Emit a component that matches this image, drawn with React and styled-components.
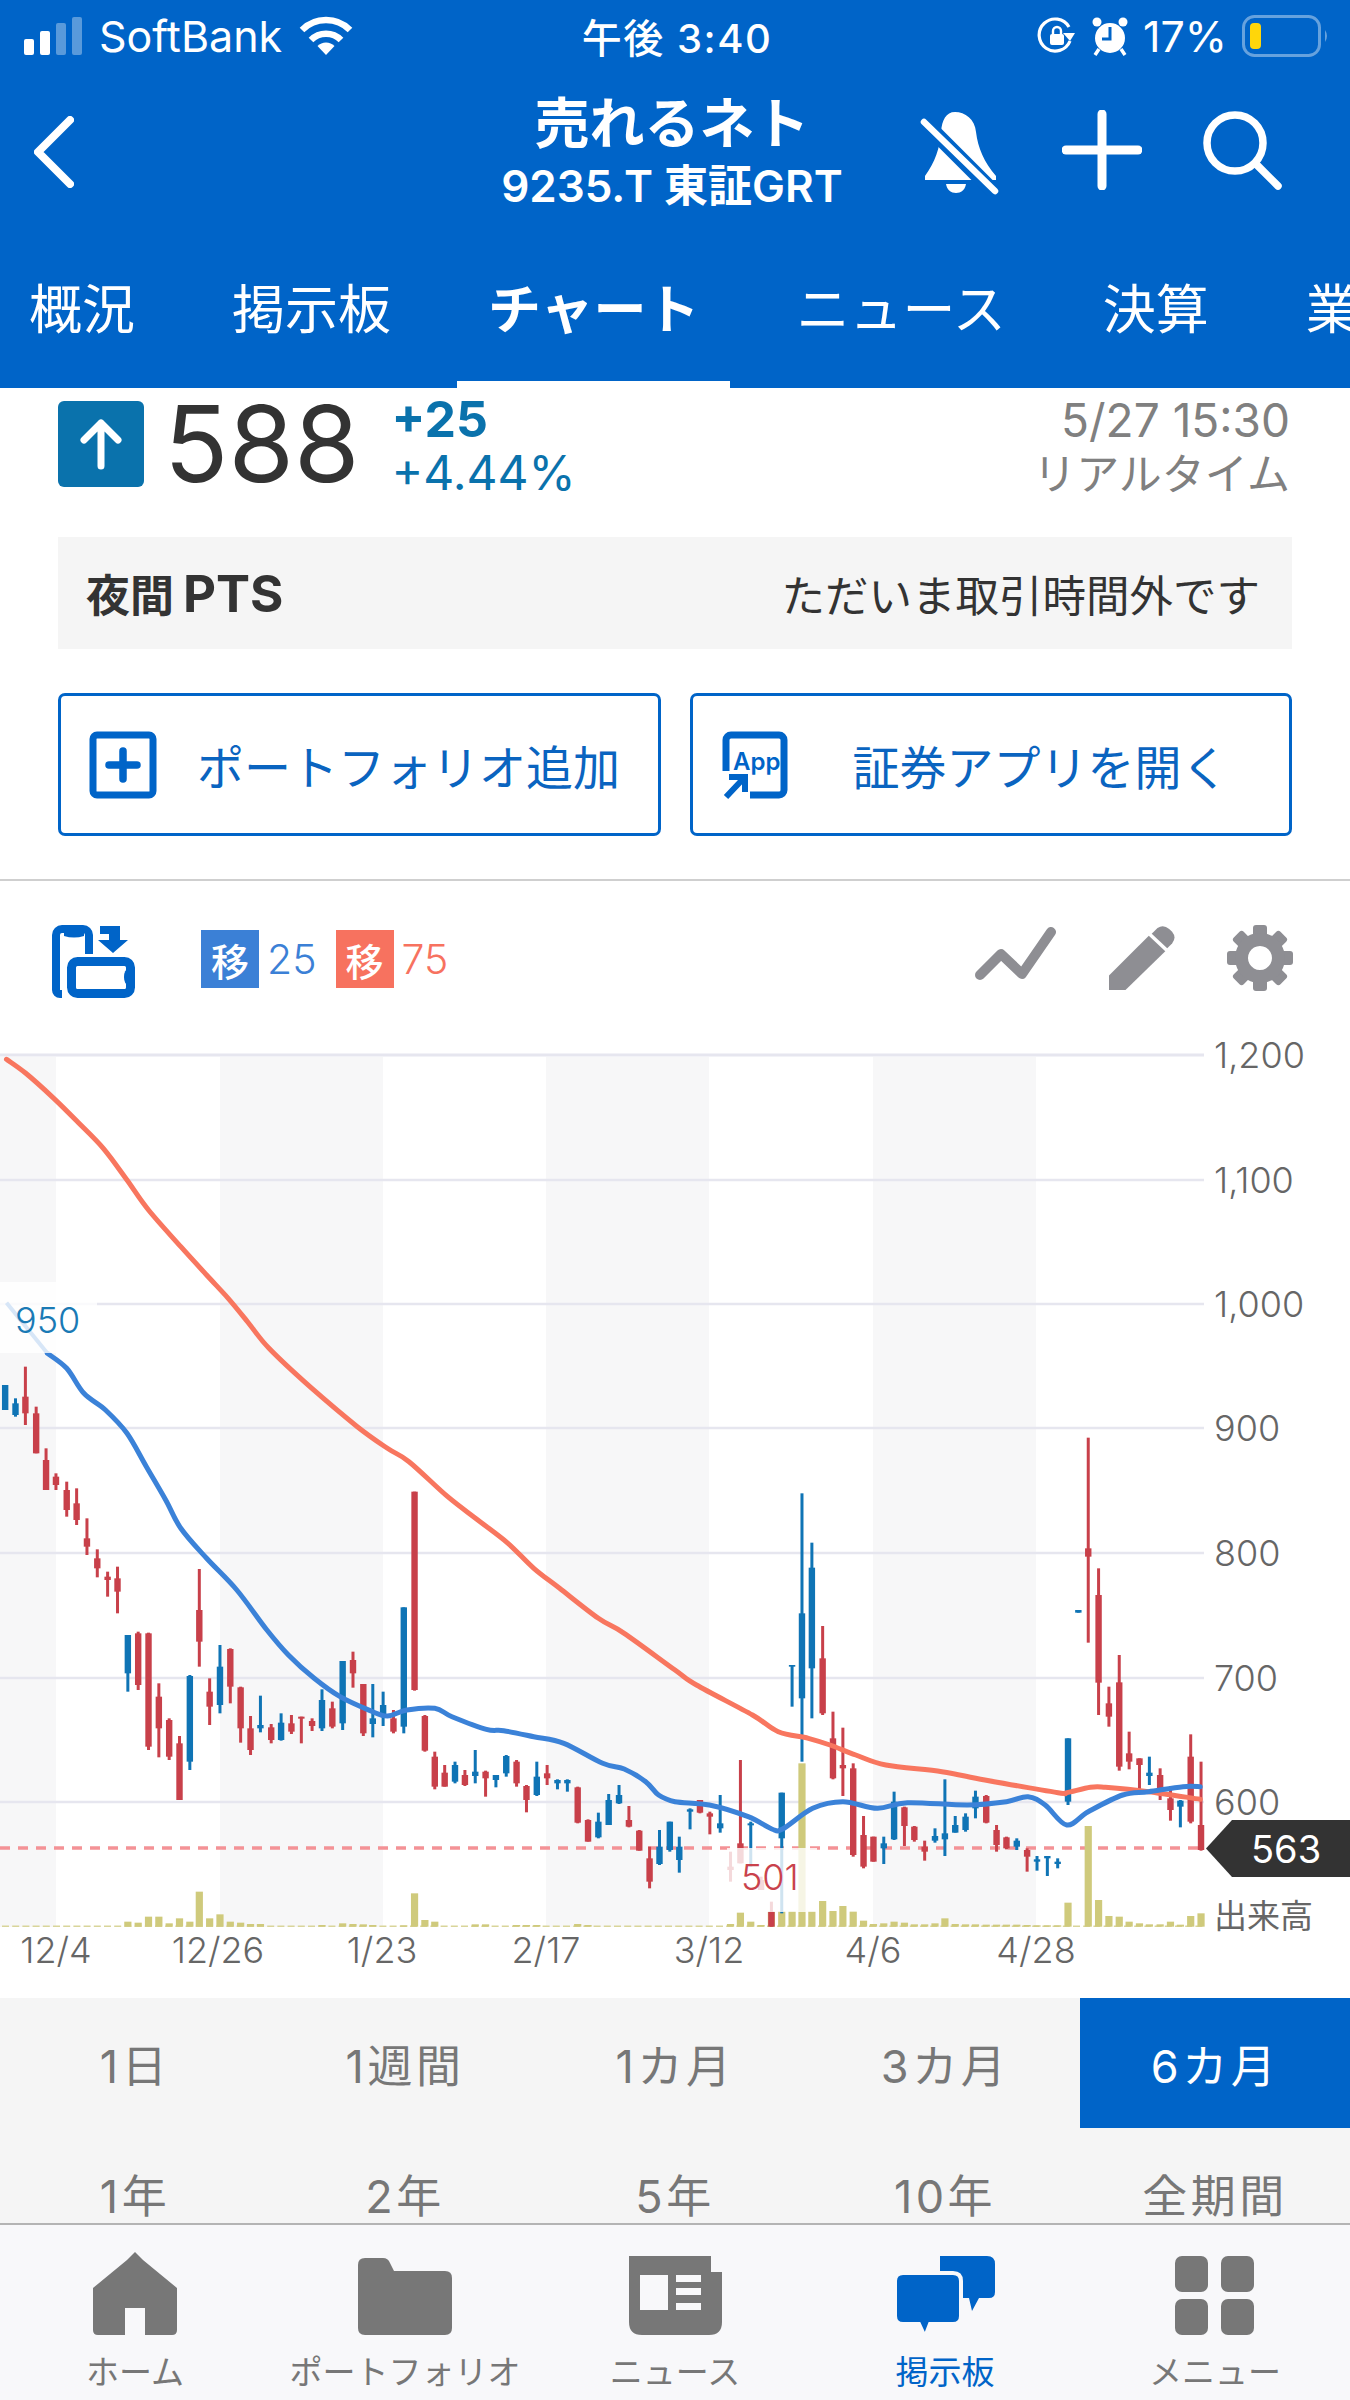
import React from 'react';
import styled, { createGlobalStyle } from 'styled-components';

const BLUE = '#0064c8';
const FONT = '"Inter", "Noto Sans CJK JP", sans-serif';

const Global = createGlobalStyle`
  html, body { margin: 0; padding: 0; background: #fff; }
  body { font-family: ${FONT}; }
  * { box-sizing: border-box; }
`;

const Page = styled.div`
  width: 1350px;
  height: 2400px;
  overflow: hidden;
  display: flex;
  flex-direction: column;
  background: #fff;
  color: #333;
`;

/* ---------- header ---------- */
const Header = styled.header`
  height: 388px;
  background: ${BLUE};
  color: #fff;
  overflow: hidden;
  display: flex;
  flex-direction: column;
`;
const StatusBar = styled.div`
  height: 72px;
  display: grid;
  grid-template-columns: 1fr auto 1fr;
  align-items: center;
  font-size: 43px;
  padding: 0 20px 0 24px;
`;
const StatusLeft = styled.div`
  display: flex;
  align-items: center;
  gap: 17px;
`;
const StatusRight = styled.div`
  display: flex;
  align-items: center;
  justify-content: flex-end;
  gap: 15px;
`;
const StatusTime = styled.div`
  font-weight: 500;
  font-size: 40px;
  letter-spacing: 1.5px;
`;
const NavRow = styled.div`
  height: 168px;
  display: grid;
  grid-template-columns: 1fr auto 1fr;
  padding: 0 40px 0 34px;
`;
const Back = styled.svg`
  width: 40px;
  height: 72px;
  margin-top: 44px;
`;
const TitleBlock = styled.div`
  display: flex;
  flex-direction: column;
  align-items: center;
  padding-top: 20px;
`;
const Title = styled.div`
  font-size: 55px;
  font-weight: 600;
  line-height: 62px;
`;
const Sub = styled.div`
  font-size: 44px;
  font-weight: 600;
  line-height: 50px;
  margin-top: 7px;
`;
const NavIcons = styled.div`
  display: flex;
  justify-content: flex-end;
  gap: 60px;
  padding: 38px 28px 0 0;
  align-items: flex-start;
`;
const Tabs = styled.nav`
  height: 148px;
  display: flex;
  gap: 97px;
  padding: 31px 0 0 29px;
`;
const Tab = styled.div`
  position: relative;
  flex: none;
  height: 117px;
  font-size: 53px;
  line-height: 78px;
  white-space: nowrap;
  font-weight: ${p => (p.$active ? 700 : 400)};
  ${p =>
    p.$active &&
    `&::after {
      content: '';
      position: absolute;
      left: -31px;
      right: -31px;
      bottom: 0;
      height: 7px;
      background: #fff;
    }`}
`;

/* ---------- quote ---------- */
const Quote = styled.section`
  height: 149px;
  padding: 13px 60px 0 58px;
  display: flex;
  align-items: flex-start;
`;
const UpBox = styled.div`
  width: 86px;
  height: 86px;
  border-radius: 6px;
  background: #0a72ac;
  display: flex;
  align-items: center;
  justify-content: center;
`;
const Price = styled.div`
  font-size: 106px;
  line-height: 86px;
  font-weight: 400;
  margin-left: 20px;
  color: #333;
`;
const Change = styled.div`
  margin-left: 32px;
  margin-top: -8px;
  display: flex;
  flex-direction: column;
  color: #0a72ac;
`;
const ChangeAbs = styled.div`
  font-size: 50px;
  font-weight: 700;
  line-height: 52px;
`;
const ChangePct = styled.div`
  font-size: 48px;
  font-weight: 400;
  line-height: 56px;
`;
const Stamp = styled.div`
  margin-left: auto;
  margin-top: -8px;
  text-align: right;
  color: #808080;
  display: flex;
  flex-direction: column;
`;
const StampDate = styled.div`
  font-size: 46px;
  line-height: 54px;
`;
const StampKind = styled.div`
  font-size: 43px;
  line-height: 54px;
`;

const PtsBox = styled.div`
  margin: 0 58px;
  height: 112px;
  background: #f5f5f5;
  display: flex;
  align-items: center;
  justify-content: space-between;
  padding: 0 32px 0 28px;
`;
const PtsLabel = styled.div`
  font-size: 44px;
  font-weight: 700;
  display: flex;
  align-items: baseline;
  gap: 9px;
`;
const PtsLatin = styled.span`
  font-size: 51px;
`;
const PtsNote = styled.div`
  font-size: 43.5px;
  font-weight: 400;
`;
const Actions = styled.div`
  margin: 44px 58px 43px;
  display: grid;
  grid-template-columns: 1fr 1fr;
  gap: 29px;
`;
const ActionBtn = styled.div`
  height: 143px;
  border: 3px solid ${BLUE};
  border-radius: 7px;
  display: flex;
  align-items: center;
  padding-left: ${p => p.$pad}px;
  gap: ${p => p.$gap}px;
  color: #0a64c0;
  font-size: 47px;
`;
const Divider = styled.div`
  height: 2px;
  background: #cfcfcf;
`;

/* ---------- tool row ---------- */
const ToolRow = styled.div`
  height: 139px;
  display: flex;
  align-items: flex-start;
  padding: 44px 57px 0 52px;
`;
const MaGroup = styled.div`
  display: flex;
  align-items: center;
  height: 58px;
  margin-top: 5px;
  margin-left: 63px;
  gap: 8px;
`;
const MaBadge = styled.div`
  width: 58px;
  height: 58px;
  background: ${p => p.$c};
  color: #fff;
  font-size: 38px;
  font-weight: 500;
  display: flex;
  align-items: center;
  justify-content: center;
`;
const MaValue = styled.div`
  color: ${p => p.$c};
  font-size: 41px;
  margin-right: 11px;
  font-weight: 300;
`;
const ToolIcons = styled.div`
  margin-left: auto;
  display: flex;
  gap: 52px;
  align-items: flex-start;
`;

/* ---------- chart ---------- */
const ChartWrap = styled.div`
  position: relative;
  height: 978px;
`;
const ChartSvg = styled.svg`
  display: block;
  width: 1350px;
  height: 978px;
`;
const AxisText = styled.text`
  font-family: ${FONT};
  font-size: ${p => p.$size || 36}px;
  fill: #666;
  font-weight: ${p => p.$weight || 300};
`;
const Callout = styled.div`
  position: absolute;
  left: ${p => p.$x}px;
  top: ${p => p.$y}px;
  width: ${p => p.$w}px;
  height: ${p => p.$h}px;
  background: rgba(255, 255, 255, 0.8);
  color: ${p => p.$c};
  font-size: 36px;
  font-weight: 300;
  padding: ${p => p.$py}px 0 0 ${p => p.$px}px;
  line-height: 35px;
`;
const LastTag = styled.div`
  position: absolute;
  left: 1206px;
  top: 800px;
  width: 144px;
  height: 57px;
  background: #333;
  color: #fff;
  font-size: 38px;
  display: flex;
  align-items: center;
  padding-left: 45px;
  clip-path: polygon(0 50%, 26px 0, 100% 0, 100% 100%, 26px 100%);
`;

/* ---------- periods ---------- */
const Periods = styled.div`
  height: 225px;
  overflow: hidden;
  background: #f5f5f5;
  display: grid;
  grid-template-columns: repeat(5, 270px);
  grid-auto-rows: 130px;
`;
const Period = styled.div`
  display: flex;
  align-items: center;
  justify-content: center;
  font-size: 45px;
  letter-spacing: 3.5px;
  color: ${p => (p.$active ? '#fff' : '#777')};
  background: ${p => (p.$active ? BLUE : 'transparent')};
`;

/* ---------- tab bar ---------- */
const TabBar = styled.div`
  height: 177px;
  border-top: 2px solid #b4b4b4;
  background: #f8f8fa;
  display: grid;
  grid-template-columns: repeat(5, 270px);
`;
const BarItem = styled.div`
  display: flex;
  flex-direction: column;
  align-items: center;
  padding-top: 27px;
  color: ${p => (p.$active ? BLUE : '#777')};
  font-size: 33px;
  line-height: 40px;
  white-space: nowrap;
`;
const BarLabel = styled.div`
  margin-top: 16px;
`;

/* ---------- chart data (zoom-image coordinates) ---------- */
const O = 1568;
const CANDLES = [
  [12,-345,-270,-345,-270,'b'],[36,-305,-250,-290,-255,'b'],[59,-400,-225,-310,-260,'r'],[84,-280,-140,-260,-140,'r'],
  [107,-155,-30,-120,-30,'r'],[130,-80,-30,-70,-45,'r'],[155,-55,50,-30,30,'r'],[178,-35,75,10,60,'r'],
  [202,55,165,115,140,'r'],[226,148,232,175,205,'r'],[250,215,290,230,240,'r'],[273,200,340,235,275,'r'],
  [297,405,575,405,520,'b'],[321,395,570,400,555,'r'],[345,398,750,400,740,'r'],[369,550,772,590,685,'r'],
  [393,655,780,660,770,'r'],[417,708,900,730,900,'r'],[441,525,810,528,785,'b'],[463,207,500,330,425,'r'],
  [487,535,675,575,620,'r'],[511,435,640,500,615,'b'],[535,445,610,447,560,'r'],[559,560,728,562,685,'r'],
  [582,648,765,685,750,'r'],[605,587,697,675,685,'b'],[630,672,730,682,720,'r'],[653,640,722,668,720,'b'],
  [677,645,702,670,695,'r'],[700,650,730,650,656,'r'],[725,655,693,663,678,'r'],[748,568,693,600,685,'b'],
  [772,605,685,625,680,'r'],[796,483,690,483,670,'b'],[820,455,563,480,520,'r'],[844,552,708,552,700,'r'],
  [866,552,712,655,672,'b'],[890,575,678,615,650,'b'],[914,630,700,655,695,'r'],[938,322,700,322,680,'b'],
  [963,-25,572,-25,570,'r'],[987,645,755,648,752,'r'],[1010,755,868,770,860,'r'],[1033,795,860,818,860,'r'],
  [1057,785,850,795,845,'b'],[1080,810,858,825,855,'r'],[1104,750,850,815,828,'b'],[1128,812,890,815,835,'r'],
  [1152,825,862,825,840,'b'],[1176,765,830,768,820,'b'],[1200,780,860,785,850,'r'],[1223,855,937,858,900,'r'],
  [1247,785,888,830,885,'b'],[1271,795,855,820,835,'r'],[1295,838,868,840,850,'b'],[1318,838,875,840,850,'b'],
  [1342,860,970,862,968,'r'],[1366,958,1025,960,1025,'r'],[1390,938,1015,965,1012,'b'],[1414,882,975,900,975,'b'],
  [1438,855,912,885,910,'b'],[1461,918,982,960,980,'r'],[1485,990,1052,992,1052,'r'],[1509,1040,1165,1075,1145,'r'],
  [1532,990,1095,1040,1092,'b'],[1556,965,1055,965,1050,'b'],
  [O+10,1010,1118,1040,1080,'b'],[O+35,925,988,928,935,'b'],[O+58,900,940,900,938,'r'],[O+81,935,1003,940,950,'r'],
  [O+105,885,998,970,985,'b'],[O+129,1055,1145,1100,1110,'r'],[O+152,780,1090,1030,1090,'r'],[O+176,965,1100,970,976,'b'],
  [O+200,1130,1170,1140,1170,'r'],[O+224,1205,1280,1235,1280,'r'],[O+248,878,1240,878,1015,'b'],[O+272,495,620,495,500,'b'],
  [O+295,-20,785,340,595,'b'],[O+318,128,655,203,505,'b'],[O+343,378,645,475,640,'r'],[O+367,635,838,715,835,'r'],
  [O+390,683,888,795,805,'r'],[O+414,790,1070,805,1065,'r'],[O+438,948,1105,1005,1100,'r'],[O+461,1010,1085,1010,1085,'r'],
  [O+485,1010,1092,1030,1045,'b'],[O+509,875,1020,905,1018,'b'],[O+533,920,1038,922,978,'r'],[O+556,978,1025,980,1020,'r'],
  [O+580,1022,1082,1040,1055,'r'],[O+604,985,1028,1008,1022,'b'],[O+627,838,1068,1000,1018,'b'],[O+651,948,998,975,998,'b'],
  [O+675,940,995,950,990,'b'],[O+698,872,955,890,925,'b'],[O+723,885,970,888,968,'r'],[O+747,975,1055,990,1035,'r'],
  [O+770,1010,1048,1012,1045,'r'],[O+794,1015,1050,1022,1040,'b'],[O+818,1045,1115,1050,1070,'r'],[O+841,1068,1112,1078,1085,'b'],
  [O+865,1068,1128,1068,1075,'b'],[O+889,1075,1105,1085,1092,'b'],[O+913,715,915,715,905,'b'],[O+937,330,338,330,338,'b'],
  [O+960,-187,428,145,170,'r'],[O+984,205,645,285,548,'r'],[O+1008,560,680,610,650,'r'],[O+1032,465,812,547,800,'r'],
  [O+1055,695,808,760,785,'r'],[O+1079,775,870,775,795,'r'],[O+1102,770,855,818,828,'b'],[O+1127,805,900,825,865,'r'],
  [O+1151,858,962,895,930,'r'],[O+1174,900,982,902,920,'b'],[O+1198,703,970,770,965,'r'],[O+1222,785,1052,975,1050,'r'],
];
const VOLS = [
  [297,1265],[321,1268],[345,1250],[369,1250],[393,1270],[417,1255],[441,1265],[463,1175],[487,1255],[511,1243],[535,1265],
  [559,1268],[582,1272],[605,1272],[748,1275],[796,1270],[820,1272],[844,1273],[866,1275],[938,1276],[963,1180],[987,1260],
  [1010,1265],[1104,1273],[1128,1273],[1200,1275],[1223,1275],[1247,1275],[1342,1272],[1366,1275],
  [O+129,1272],[O+152,1238],[O+176,1265],[O+200,1275],[O+224,1235],[O+248,1233],[O+272,1233],[O+295,790],[O+318,1233],
  [O+343,1203],[O+367,1233],[O+390,1218],[O+414,1235],[O+438,1262],[O+461,1272],[O+485,1270],[O+509,1265],[O+533,1268],
  [O+556,1273],[O+580,1273],[O+604,1270],[O+627,1255],[O+651,1272],[O+675,1273],[O+698,1273],[O+723,1274],[O+747,1274],
  [O+770,1274],[O+794,1274],[O+818,1275],[O+841,1276],[O+865,1276],[O+889,1276],[O+913,1208],[O+960,978],[O+984,1200],
  [O+1008,1248],[O+1032,1250],[O+1055,1265],[O+1079,1270],[O+1102,1273],[O+1127,1273],[O+1151,1265],[O+1174,1274],
  [O+1198,1248],[O+1222,1240],
];
const MA75 = [
  [15,-1322],[60,-1280],[125,-1205],[180,-1135],[240,-1055],[295,-960],[345,-870],[420,-760],[480,-675],[530,-605],[575,-535],
  [625,-455],[720,-340],[830,-220],[900,-155],[950,-115],[1040,-10],[1110,60],[1180,130],[1240,205],[1300,265],[1390,355],
  [1450,400],[1568,510],[O+50,555],[O+180,645],[O+240,695],[O+310,715],[O+360,735],[O+420,765],[O+490,795],[O+620,815],
  [O+720,840],[O+890,878],[O+910,878],[O+965,862],[O+1000,862],[O+1100,875],[O+1220,898],
];
const MA25_HEAD = [[15,-592],[110,-440]];
const MA25 = [
  [110,-440],[155,-395],[195,-320],[245,-270],[295,-200],[340,-100],[385,0],[420,85],[480,175],[550,270],[620,390],[670,465],
  [730,535],[790,590],[860,632],[900,648],[945,630],[1010,625],[1050,650],[1130,688],[1170,692],[1240,710],[1310,730],
  [1400,790],[1450,807],[1500,845],[1530,885],[1568,905],[O+80,915],[O+170,950],[O+225,987],[O+250,987],[O+320,925],
  [O+390,905],[O+470,925],[O+540,908],[O+680,915],[O+770,905],[O+820,890],[O+860,915],[O+910,975],[O+960,935],[O+1040,885],
  [O+1100,875],[O+1180,860],[O+1220,860],
];
const X = x => x / 2.323;
const Y = y => 1500 + y / 3;

/* smooth path through the points (Catmull-Rom to Bezier) */
const smooth = a => {
  const p = a.map(([x, y]) => [X(x), Y(y)]);
  let d = `M${p[0][0].toFixed(1)} ${p[0][1].toFixed(1)}`;
  for (let i = 0; i < p.length - 1; i++) {
    const p0 = p[i - 1] || p[i];
    const p1 = p[i];
    const p2 = p[i + 1];
    const p3 = p[i + 2] || p2;
    const c1 = [p1[0] + (p2[0] - p0[0]) / 6, p1[1] + (p2[1] - p0[1]) / 6];
    const c2 = [p2[0] - (p3[0] - p1[0]) / 6, p2[1] - (p3[1] - p1[1]) / 6];
    d += ` C${c1[0].toFixed(1)} ${c1[1].toFixed(1)} ${c2[0].toFixed(1)} ${c2[1].toFixed(1)} ${p2[0].toFixed(1)} ${p2[1].toFixed(1)}`;
  }
  return d;
};

const GRID = [
  [1055, '1,200'], [1180, '1,100'], [1304, '1,000'], [1428, '900'], [1553, '800'], [1678, '700'], [1802, '600'],
];
const STRIPES = [0, 220, 546, 873];
const DATES = [[56,'12/4'],[218,'12/26'],[382,'1/23'],[546,'2/17'],[709,'3/12'],[873,'4/6'],[1036,'4/28']];

function Chart() {
  return (
    <ChartWrap>
      <ChartSvg viewBox="0 1020 1350 978">
        {STRIPES.map((x, i) => (
          <rect key={x} x={x} y={1057} width={i === 0 ? 56 : 163} height={870} fill="#f7f7f8" />
        ))}
        {GRID.map(([y, t]) => (
          <g key={t}>
            <line x1={0} x2={1204} y1={y} y2={y} stroke="#e6e6ef" strokeWidth={y === 1055 ? 3 : 2.4} />
            <AxisText x={1214} y={y + 13}>{t}</AxisText>
          </g>
        ))}
        <line x1={0} x2={1204} y1={1848} y2={1848} stroke="#f49296" strokeWidth={3.5} strokeDasharray="10 8" />
        {Array.from({ length: 118 }, (_, i) => (
          <rect key={i} x={2 + i * 10.2} y={1925.5} width={7} height={1.5} fill="#d9d59a" />
        ))}
        {VOLS.map(([x, t]) => (
          <rect key={x} x={X(x) - 3.6} y={Y(t)} width={7.2} height={Y(1280) - Y(t)} fill="#cfca7c" />
        ))}
        {CANDLES.map(([x, wt, wb, bt, bb, c]) => {
          const col = c === 'r' ? '#c8404a' : '#0f74b5';
          return (
            <g key={x} fill={col}>
              <rect x={X(x) - 1.5} y={Y(wt)} width={3} height={Y(wb) - Y(wt)} />
              <rect x={X(x) - 3.2} y={Y(bt)} width={6.4} height={Math.max(Y(bb) - Y(bt), 1.5)} />
            </g>
          );
        })}
        <path d={smooth(MA25_HEAD)} fill="none" stroke="#3b82d8" strokeWidth={4} />
        <path d={smooth(MA75)} fill="none" stroke="#f8765f" strokeWidth={5} strokeLinecap="round" />
        <path d={smooth(MA25)} fill="none" stroke="#3b82d8" strokeWidth={5} strokeLinecap="round" />
        <AxisText x={1214} y={1928} $size={33} $weight={400}>出来高</AxisText>
        {DATES.map(([x, t]) => (
          <AxisText key={t} x={x} y={1963} textAnchor="middle">{t}</AxisText>
        ))}
      </ChartSvg>
      <Callout $x={0} $y={262} $w={97} $h={71} $c="#1a7ab5" $px={15} $py={21}>950</Callout>
      <Callout $x={727} $y={828} $w={90} $h={64} $c="#c9424c" $px={14} $py={12}>501</Callout>
      <LastTag>563</LastTag>
    </ChartWrap>
  );
}

/* ---------- icons ---------- */
const Signal = () => (
  <svg width="58" height="38" viewBox="0 0 58 38" fill="#fff">
    <rect x="0" y="22" width="10" height="16" rx="2" />
    <rect x="16" y="14" width="10" height="24" rx="2" />
    <rect x="32" y="6" width="10" height="32" rx="2" opacity=".35" />
    <rect x="48" y="0" width="10" height="38" rx="2" opacity=".35" />
  </svg>
);
const Wifi = () => (
  <svg width="54" height="40" viewBox="0 0 54 40" fill="none" stroke="#fff" strokeWidth="6.5">
    <path d="M3 14 A34 34 0 0 1 51 14" />
    <path d="M12 24 A21 21 0 0 1 42 24" />
    <path d="M27 39 L18.5 30 A12 12 0 0 1 35.5 30 Z" fill="#fff" stroke="none" />
  </svg>
);
const RotLock = () => (
  <svg width="40" height="40" viewBox="0 0 40 40" fill="none">
    <path d="M33 25 A16 16 0 1 1 32 11" stroke="#fff" strokeWidth="3.2" />
    <path d="M26 17 L38 17 L33 25 Z" fill="#fff" />
    <rect x="13" y="18" width="14" height="11" rx="2" fill="#fff" />
    <path d="M16 18 V15 a4 4 0 0 1 8 0 V18" stroke="#fff" strokeWidth="2.4" />
  </svg>
);
const Alarm = () => (
  <svg width="36" height="40" viewBox="0 0 36 40" fill="#fff">
    <circle cx="18" cy="22" r="15" />
    <circle cx="5" cy="6" r="4.5" />
    <circle cx="31" cy="6" r="4.5" />
    <path d="M7 33 L3 39 M29 33 L33 39" stroke="#fff" strokeWidth="3.5" />
    <path d="M18 11 V23 H10" fill="none" stroke={BLUE} strokeWidth="3" />
  </svg>
);
const Battery = () => (
  <svg width="88" height="42" viewBox="0 0 88 42" fill="none">
    <rect x="1.5" y="1.5" width="76" height="39" rx="11" stroke="rgba(255,255,255,.4)" strokeWidth="3" />
    <rect x="8" y="8" width="11" height="26" rx="4" fill="#ffd60a" />
    <path d="M83 15 q4 6 0 12 z" fill="rgba(255,255,255,.4)" />
  </svg>
);
const BellOff = () => (
  <svg width="84" height="86" viewBox="0 0 84 86">
    <path d="M37 2 C28 2 24 10 23 22 C22 38 17 52 7 66 V70 H78 V66 C66 52 60 38 58 22 C57 9 47 2 37 2 Z" fill="#fff" />
    <path d="M28 74 H48 C47 80 43 83 38 83 C33 83 29 80 28 74 Z" fill="#fff" />
    <line x1="5" y1="11" x2="76" y2="82" stroke={BLUE} strokeWidth="15" />
    <line x1="6" y1="12" x2="77" y2="81" stroke="#fff" strokeWidth="6.5" strokeLinecap="round" />
  </svg>
);
const Plus = () => (
  <svg width="80" height="80" viewBox="0 0 80 80" stroke="#fff" strokeWidth="9" strokeLinecap="round">
    <line x1="40" y1="4" x2="40" y2="76" />
    <line x1="4" y1="40" x2="76" y2="40" />
  </svg>
);
const Search = () => (
  <svg width="80" height="80" viewBox="0 0 80 80" fill="none" stroke="#fff" strokeWidth="7.5" strokeLinecap="round">
    <circle cx="33" cy="33" r="28" />
    <line x1="54" y1="54" x2="76" y2="76" />
  </svg>
);
const AddBox = () => (
  <svg width="68" height="68" viewBox="0 0 68 68" fill="none" stroke={BLUE}>
    <rect x="4" y="4" width="60" height="60" rx="4" strokeWidth="7" />
    <path d="M34 20 V48 M20 34 H48" strokeWidth="7.5" strokeLinecap="round" />
  </svg>
);
const AppBox = () => (
  <svg width="68" height="70" viewBox="0 0 68 70" fill="none" stroke={BLUE}>
    <path d="M5 41 V10 a5 5 0 0 1 5 -5 H58 a5 5 0 0 1 5 5 V60 a5 5 0 0 1 -5 5 H29" strokeWidth="7" />
    <text x="12" y="40" fontFamily={FONT} fontSize="24" fontWeight="600" fill={BLUE} stroke="none">App</text>
    <path d="M5 67 L22 49 M8 47 H24 V62" strokeWidth="6" />
  </svg>
);
const Transfer = () => (
  <svg width="86" height="76" viewBox="0 0 86 76" fill="none" stroke={BLUE}>
    <path d="M10 69 H8 a4 4 0 0 1 -4 -4 V10 a6 6 0 0 1 6 -6 H31 a6 6 0 0 1 6 6 V29" strokeWidth="8" />
    <path d="M12 6 h20 v5 q-10 3 -20 0 z" fill={BLUE} stroke="none" />
    <path d="M48 1 H68 V15 H76 L61 28 L46 15 H57 V9 H48 Z" fill={BLUE} stroke="none" />
    <rect x="19.5" y="36.5" width="59" height="32" rx="6" strokeWidth="9" />
    <path d="M76 44 a4 8 0 0 0 0 16 z" fill={BLUE} stroke="none" />
  </svg>
);
const LineTool = () => (
  <svg width="82" height="60" viewBox="0 0 82 60" fill="none" stroke="#8e8e93" strokeWidth="10" strokeLinecap="round" strokeLinejoin="round">
    <path d="M5 50 L26 29 L47 49 L76 7" />
  </svg>
);
const Pencil = () => (
  <svg width="66" height="66" viewBox="0 0 68 66" fill="#8e8e93">
    <path d="M0 66 V51 L41 10 L58 26 L17 66 Z" />
    <path d="M44 8 L50 2 Q56 -2 62 3 L65 6 Q70 12 65 18 L60 23 Z" />
  </svg>
);
const Gear = () => {
  const teeth = Array.from({ length: 8 }, (_, i) => i * 45);
  return (
    <svg width="66" height="66" viewBox="0 0 66 66" fill="#8e8e93">
      {teeth.map(a => (
        <rect key={a} x="26" y="0" width="14" height="16" rx="3" transform={`rotate(${a} 33 33)`} />
      ))}
      <path fillRule="evenodd" d="M33 8 a25 25 0 1 0 0.01 0 Z M33 21 a12 12 0 1 1 -0.01 0 Z" />
    </svg>
  );
};
const Home = () => (
  <svg width="100" height="84" viewBox="0 0 100 84" fill="#777">
    <path d="M50 0 L58 8 L92 36 V78 q0 5 -5 5 H60 V56 H40 V83 H13 q-5 0 -5 -5 V36 L42 8 Z" />
  </svg>
);
const Folder = () => (
  <svg width="100" height="84" viewBox="0 0 100 84" fill="#777">
    <path d="M10 6 H28 q5 0 7 5 l4 8 H90 q7 0 7 7 V76 q0 7 -7 7 H10 q-7 0 -7 -7 V13 q0 -7 7 -7 Z" />
  </svg>
);
const News = () => (
  <svg width="100" height="84" viewBox="0 0 100 84">
    <path d="M4 4 H86 V20 H97 V70 q0 13 -13 13 H17 q-13 0 -13 -13 Z" fill="#777" />
    <path d="M15 23 H43 V58 H15 Z M51 23 H76 V30 H51 Z M51 36 H76 V43 H51 Z M51 51 H76 V58 H51 Z" fill="#f8f8fa" />
  </svg>
);
const Board = () => (
  <svg width="100" height="84" viewBox="0 0 100 84" fill={BLUE}>
    <path d="M45 4 H92 q8 0 8 8 V40 q0 6 -6 6 H84 L77 59 L74 46 H50 q-5 0 -5 -5 Z" />
    <path d="M8 21 H58 q8 0 8 8 V64 q0 8 -8 8 H35 L30 85 L24 72 H8 q-8 0 -8 -8 V29 q0 -8 8 -8 Z" stroke="#f8f8fa" strokeWidth="4" />
  </svg>
);
const Menu = () => (
  <svg width="100" height="84" viewBox="0 0 100 84" fill="#777">
    <rect x="10" y="4" width="33" height="36" rx="7" />
    <rect x="56" y="4" width="33" height="36" rx="7" />
    <rect x="10" y="47" width="33" height="36" rx="7" />
    <rect x="56" y="47" width="33" height="36" rx="7" />
  </svg>
);

const PERIODS = ['1日', '1週間', '1カ月', '3カ月', '6カ月', '1年', '2年', '5年', '10年', '全期間'];
const BAR = [
  [Home, 'ホーム'], [Folder, 'ポートフォリオ'], [News, 'ニュース'], [Board, '掲示板', true], [Menu, 'メニュー'],
];
const TABS = ['概況', '掲示板', 'チャート', 'ニュース', '決算', '業績'];

export default function App() {
  return (
    <Page>
      <Global />
      <Header>
        <StatusBar>
          <StatusLeft>
            <Signal />
            <span>SoftBank</span>
            <Wifi />
          </StatusLeft>
          <StatusTime>午後 3:40</StatusTime>
          <StatusRight>
            <RotLock />
            <Alarm />
            <span>17%</span>
            <Battery />
          </StatusRight>
        </StatusBar>
        <NavRow>
          <Back viewBox="0 0 40 72" fill="none" stroke="#fff" strokeWidth="8" strokeLinecap="round" strokeLinejoin="round">
            <path d="M36 4 L4 36 L36 68" />
          </Back>
          <TitleBlock>
            <Title>売れるネト</Title>
            <Sub>9235.T 東証GRT</Sub>
          </TitleBlock>
          <NavIcons>
            <BellOff />
            <Plus />
            <Search />
          </NavIcons>
        </NavRow>
        <Tabs>
          {TABS.map(t => (
            <Tab key={t} $active={t === 'チャート'}>{t}</Tab>
          ))}
        </Tabs>
      </Header>

      <Quote>
        <UpBox>
          <svg width="42" height="52" viewBox="0 0 42 52" fill="none" stroke="#fff" strokeWidth="7" strokeLinecap="round" strokeLinejoin="round">
            <path d="M21 48 V5 M4 22 L21 5 L38 22" />
          </svg>
        </UpBox>
        <Price>588</Price>
        <Change>
          <ChangeAbs>+25</ChangeAbs>
          <ChangePct>+4.44%</ChangePct>
        </Change>
        <Stamp>
          <StampDate>5/27 15:30</StampDate>
          <StampKind>リアルタイム</StampKind>
        </Stamp>
      </Quote>

      <PtsBox>
        <PtsLabel>夜間<PtsLatin>PTS</PtsLatin></PtsLabel>
        <PtsNote>ただいま取引時間外です</PtsNote>
      </PtsBox>

      <Actions>
        <ActionBtn $pad={28} $gap={40}>
          <AddBox />
          ポートフォリオ追加
        </ActionBtn>
        <ActionBtn $pad={28} $gap={64}>
          <AppBox />
          証券アプリを開く
        </ActionBtn>
      </Actions>
      <Divider />

      <ToolRow>
        <Transfer />
        <MaGroup>
          <MaBadge $c="#3b80d6">移</MaBadge>
          <MaValue $c="#3b80d6">25</MaValue>
          <MaBadge $c="#f7725f">移</MaBadge>
          <MaValue $c="#f7725f">75</MaValue>
        </MaGroup>
        <ToolIcons>
          <LineTool />
          <Pencil />
          <Gear />
        </ToolIcons>
      </ToolRow>

      <Chart />

      <Periods>
        {PERIODS.map(p => (
          <Period key={p} $active={p === '6カ月'}>{p}</Period>
        ))}
      </Periods>

      <TabBar>
        {BAR.map(([Icon, label, active]) => (
          <BarItem key={label} $active={active}>
            <Icon />
            <BarLabel>{label}</BarLabel>
          </BarItem>
        ))}
      </TabBar>
    </Page>
  );
}
